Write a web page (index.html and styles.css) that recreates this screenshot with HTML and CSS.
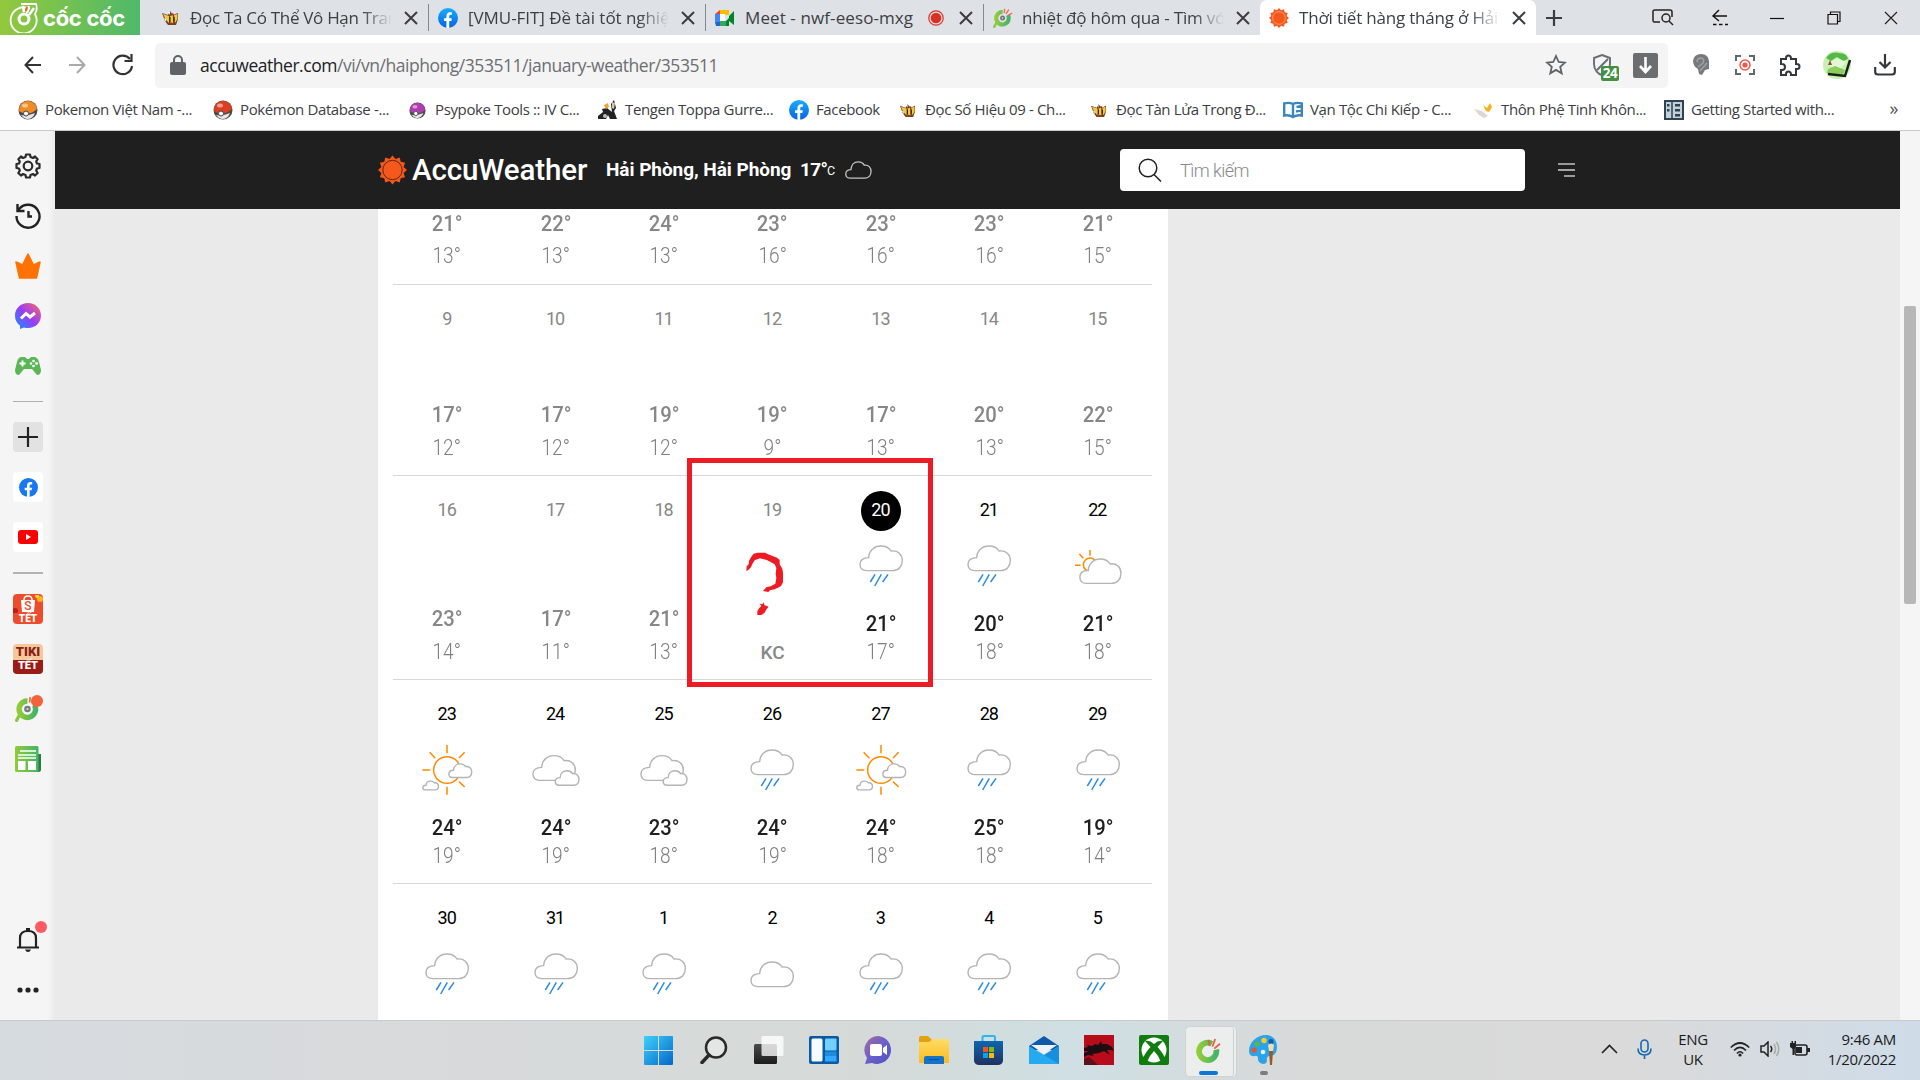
FILE: index.html
```html
<!DOCTYPE html>
<html lang="vi">
<head>
<meta charset="utf-8">
<title>Thời tiết hàng tháng ở Hải Phòng</title>
<link rel="stylesheet" href="styles.css">
</head>
<body>
<svg class="defs" width="0" height="0">
  <defs>
    <linearGradient id="gWin" x1="0" y1="0" x2="1" y2="1"><stop offset="0" stop-color="#3ed0fb"/><stop offset="1" stop-color="#0468c9"/></linearGradient>
    <linearGradient id="gFb" x1="0" y1="0" x2="0" y2="1"><stop offset="0" stop-color="#19aeff"/><stop offset="1" stop-color="#0562e0"/></linearGradient>
    <linearGradient id="gMsg" x1="0" y1="1" x2="1" y2="0"><stop offset="0" stop-color="#0695ff"/><stop offset=".5" stop-color="#9a3cf8"/><stop offset="1" stop-color="#ff6c60"/></linearGradient>
    <linearGradient id="gChat" x1="0" y1="0" x2="1" y2="1"><stop offset="0" stop-color="#a86a9c"/><stop offset=".5" stop-color="#6a60cc"/><stop offset="1" stop-color="#4b53bc"/></linearGradient>
    <linearGradient id="gGreen" x1="0" y1="0" x2="1" y2="0"><stop offset="0" stop-color="#92cb3b"/><stop offset="1" stop-color="#43b565"/></linearGradient>
    <linearGradient id="gYel" x1="0" y1="0" x2="0" y2="1"><stop offset="0" stop-color="#ffdb66"/><stop offset="1" stop-color="#fcbc1c"/></linearGradient>
    <linearGradient id="gStore" x1="0" y1="0" x2="0" y2="1"><stop offset="0" stop-color="#0d67b0"/><stop offset="1" stop-color="#21315f"/></linearGradient>
    <linearGradient id="gDark" x1="0" y1="0" x2="0" y2="1"><stop offset="0" stop-color="#4a4a4a"/><stop offset="1" stop-color="#1c1c1c"/></linearGradient>
    <path id="cloud" d="M32 86C18 86 12 78 12 67C12 54 22 47 38 47C39 26 54 12 75 12C90 12 99 17 105 27C126 24 139 38 139 55C139 73 128 86 110 86Z" vector-effect="non-scaling-stroke"/>
    <symbol id="rain" viewBox="0 0 150 150"><use href="#cloud" class="cl"/><path class="drop" d="M57 97L43 120M76 97L56 132M96 97L80 120"/></symbol>
    <symbol id="cloudy" viewBox="0 0 150 150"><use href="#cloud" class="cl" y="24"/></symbol>
    <symbol id="clouds" viewBox="0 0 150 150"><use href="#cloud" class="cl" transform="translate(-6 17)"/><use href="#cloud" class="cl" transform="translate(66 67) scale(.56 .59)"/></symbol>
    <symbol id="sunny" viewBox="0 0 150 150" overflow="visible"><circle class="sun" cx="75" cy="72" r="40"/><path class="sun" d="M75-3V22M75 122V146M1 72H25M23 19L40 37M128 19L111 36M128 123L111 107"/><use href="#cloud" class="cl" transform="translate(74 47) scale(.54 .55)"/><use href="#cloud" class="cl" transform="translate(-2 101) scale(.37 .355)"/></symbol>
    <symbol id="part" viewBox="0 0 150 150"><circle class="sun" cx="51" cy="68" r="20"/><path class="sun" d="M51 24V41M19 36L31 49M6 70H23"/><use href="#cloud" class="cl" transform="translate(9 39) scale(.97 .99)"/></symbol>
    <symbol id="fb" viewBox="0 0 20 20"><circle cx="10" cy="10" r="10"/><path fill="#fff" d="M8.4 20V13H6V10.200H8.400V8.100C8.400 5.600 9.800 4.300 12 4.300C13 4.300 13.900 4.500 13.900 4.500V6.800H12.700C11.600 6.800 11.200 7.500 11.200 8.300V10.200H13.800L13.400 13H11.200V20Z"/></symbol>
    <symbol id="coc" viewBox="0 0 24 24"><path d="M5 16L1.500 22.500" stroke="#8cc83c" stroke-width="3" stroke-linecap="round"/><path d="M18 8.500A7.600 7.600 0 1 1 11.500 4.600" fill="none" stroke="url(#gGreen)" stroke-width="5"/><circle cx="11.500" cy="12" r="3" fill="#77797c"/><circle cx="11.500" cy="12" r="1" fill="#ddd"/><path d="M13.500 6L14 1M15.500 7L19 2M17.500 9.500L23 6" stroke="#f2694b" stroke-width="1.600"/></symbol>
    <symbol id="sunlogo" viewBox="-15 -15 30 30"><path fill="#f4581b" d="M0-15L3-11.500L7.500-13L8.500-8.500L13-7.500L11.500-3L15 0L11.500 3L13 7.500L8.500 8.500L7.500 13L3 11.500L0 15L-3 11.500L-7.500 13L-8.500 8.500L-13 7.500L-11.500 3L-15 0L-11.500-3L-13-7.500L-8.500-8.500L-7.500-13L-3-11.500Z"/><circle r="10" fill="#f4581b" stroke="#5a2410"/></symbol>
    <symbol id="sunfav" viewBox="-15 -15 30 30"><path fill="#f4581b" d="M0-15L3-11.500L7.500-13L8.500-8.500L13-7.500L11.500-3L15 0L11.500 3L13 7.500L8.500 8.500L7.500 13L3 11.500L0 15L-3 11.500L-7.500 13L-8.500 8.500L-13 7.500L-11.500 3L-15 0L-11.500-3L-13-7.500L-8.500-8.500L-7.500-13L-3-11.500Z"/><circle r="9.500" fill="#f4581b" stroke="#fbb899"/></symbol>
    <symbol id="bee" viewBox="0 0 18 18"><path fill="#6b4420" d="M1 4L7 6L9 2L12 6L17 4V10L15 16H7L4 12Z"/><path fill="#f3c744" d="M2 5L8 7V14L5 11ZM9 7L12 6V14L9 15ZM13 6L16.500 5V10L14 14Z"/><path fill="#fff" d="M7 3L9 2.500V6ZM3 9L5 10V13Z"/><path fill="#b5291d" d="M11 4L13 5L12 8ZM8 13L12 14L10 16Z"/><path d="M9 8V13M13 8V12" stroke="#2c1a10"/></symbol>
    <symbol id="x" viewBox="0 0 14 14"><path d="M1 1L13 13M13 1L1 13" fill="none" stroke="#3a3d41" stroke-width="2"/></symbol>
    <symbol id="ball" viewBox="0 0 20 20"><circle cx="10" cy="10" r="9.500" fill="#4c4846"/><path d="M1 11A9 9 0 0 1 19 9Q14 14 10 13Q5 14 1 11Z"/><ellipse cx="7" cy="5.500" rx="3" ry="2" fill="#fff" opacity=".5"/><path fill="#e6e6ea" d="M3 15Q10 16 17 13Q15 19 9 19Q5 18 3 15Z"/><circle cx="8" cy="13.500" r="2.500" fill="#fff" stroke="#444"/></symbol>
  </defs>
</svg>

<header class="tabs">
  <div class="brand">
    <svg width="30" height="30" viewBox="0 0 30 30" fill="none" stroke="#fff"><path d="M21 6A13 13 0 1 0 26 11C28 8 28 4 27 1H12" stroke-width="1.800"/><circle cx="15" cy="16" r="5" stroke-width="3"/><path d="M15 9L14 3M18 10L20 3M20 12L25 5" stroke-width="2.500"/><path d="M17 8L18 4" stroke="#f05b3a" stroke-width="2"/></svg>
    <span class="wordmark">cốc cốc</span>
  </div>
  <div class="tab t1"><svg width="18" height="18"><use href="#bee"/></svg><span class="title">Đọc Ta Có Thể Vô Hạn Tran</span><svg class="x"><use href="#x"/></svg></div>
  <div class="tab t2"><svg width="20" height="20" fill="url(#gFb)"><use href="#fb"/></svg><span class="title">[VMU-FIT] Đề tài tốt nghiệ</span><svg class="x"><use href="#x"/></svg></div>
  <div class="tab t3"><svg width="20" height="16" viewBox="0 0 20 16"><path fill="#ea4335" d="M0 4L5 0V4Z"/><path fill="#fbbc04" d="M5 0H14V5H5Z"/><path fill="#4285f4" d="M0 4H5V12H0Z"/><path fill="#34a853" d="M5 11H14V16H5Z"/><path fill="#1967d2" d="M0 12H5V16H1Z"/><path fill="#00832d" d="M14 6L19 1V15L14 11V16H11V11L14 8Z"/><path fill="#fff" d="M5 4H10V11H5Z"/></svg><span class="title">Meet - nwf-eeso-mxg</span><svg class="rec" width="16" height="16" viewBox="0 0 16 16"><circle cx="8" cy="8" r="7.200" fill="none" stroke="#d93025" stroke-width="1.200"/><circle cx="8" cy="8" r="5.300" fill="#d93025"/></svg><svg class="x"><use href="#x"/></svg></div>
  <div class="tab t4"><svg width="20" height="20"><use href="#coc"/></svg><span class="title">nhiệt độ hôm qua - Tìm vớ</span><svg class="x"><use href="#x"/></svg></div>
  <div class="tab t5"><svg width="20" height="20"><use href="#sunfav"/></svg><span class="title">Thời tiết hàng tháng ở Hải</span><svg class="x"><use href="#x"/></svg></div>
  <svg class="newtab" width="16" height="16" viewBox="0 0 16 16"><path d="M8 0V16M0 8H16" stroke="#3a3d41" stroke-width="2.200"/></svg>
  <div class="wincontrols">
    <svg width="22" height="18" viewBox="0 0 22 18" fill="none" stroke="#222" stroke-width="1.500"><path d="M8 13H2Q1 13 1 11V2Q1 1 3 1H18Q20 1 20 3V8"/><circle cx="14" cy="9" r="4"/><path d="M17 12L21 16"/></svg>
    <svg width="18" height="18" viewBox="0 0 18 18" fill="none" stroke="#111" stroke-width="1.400"><path d="M16 7H2M8 1L2 7L8 12"/><path d="M2 15.500H17" stroke-dasharray="3.500 2.500"/></svg>
    <svg width="14" height="18" viewBox="0 0 14 18"><path d="M0 9.500H14" stroke="#111" stroke-width="1.200"/></svg>
    <svg width="14" height="14" viewBox="0 0 14 14" fill="none" stroke="#111" stroke-width="1.200"><path d="M1 3.500H10.500V13H1ZM3.500 3V1H13V10.500H11"/></svg>
    <svg width="14" height="14" viewBox="0 0 14 14"><path d="M1 1L13 13M13 1L1 13" stroke="#222" stroke-width="1.200"/></svg>
  </div>
</header>

<nav class="toolbar">
  <div class="navbtns">
    <svg width="18" height="18" viewBox="0 0 18 18" fill="none" stroke="#333" stroke-width="2"><path d="M17 9H2M9 1L1.500 9L9 17"/></svg>
    <svg width="18" height="18" viewBox="0 0 18 18" fill="none" stroke="#aaa" stroke-width="2"><path d="M1 9H16M9 1L16.500 9L9 17"/></svg>
    <svg width="22" height="22" viewBox="0 0 22 22" fill="none" stroke="#333" stroke-width="2.200"><path d="M20 12A9.300 9.300 0 1 1 18 5"/><path d="M19.500 0V7H12.500"/></svg>
  </div>
  <div class="omnibox">
    <svg width="16" height="20" viewBox="0 0 16 20"><rect y="7" width="16" height="13" rx="2" fill="#5f6368"/><path d="M4 8V5A4 4 0 0 1 12 5V8" fill="none" stroke="#5f6368" stroke-width="2"/></svg>
    <span class="url"><b>accuweather.com</b>/vi/vn/haiphong/353511/january-weather/353511</span>
    <svg class="star" width="22" height="22" viewBox="0 0 22 22"><path d="M11 2L13.700 8L20 8.600L15.200 12.800L16.700 19.300L11 15.900L5.300 19.300L6.800 12.800L2 8.600L8.300 8Z" fill="none" stroke="#5f6368" stroke-width="1.800"/></svg>
    <span class="shield"><svg width="18" height="22" viewBox="0 0 18 22"><path d="M9 1L17 4V10C17 16 13 20 9 21C5 20 1 16 1 10V4ZM15 5L4 16" fill="none" stroke="#6a6d70" stroke-width="1.900"/></svg><i>24</i></span>
    <svg class="dl" width="25" height="25" viewBox="0 0 25 25"><rect width="25" height="25" rx="2" fill="#6a6e70"/><path d="M12.500 4V19M7 13L12.500 19L18 13" fill="none" stroke="#fff" stroke-width="2.600"/></svg>
  </div>
  <div class="exts">
    <svg width="16" height="22" viewBox="0 0 16 22"><path d="M8 0C13 0 16 3 16 8V15L12 16L9 21L6 20L5 15Q0 12 0 7Q1 0 8 0Z" fill="#77797b"/><path d="M4 8Q4 4 8 4Q12 5 10 9L5 13M7 17L14 9" fill="none" stroke="#a0a0a0" stroke-width="1.500"/></svg>
    <svg width="20" height="20" viewBox="0 0 20 20"><path d="M1 6V1H6M14 1H19V6M19 14V19H14M6 19H1V14" fill="none" stroke="#63666a" stroke-width="2"/><circle cx="10" cy="10" r="5" fill="none" stroke="#f15a4a" stroke-width="1.500"/><circle cx="10" cy="10" r="2.600" fill="#f15a4a"/></svg>
    <svg width="23" height="23" viewBox="0 0 23 23"><path d="M3 5H8V4A2.500 2.500 0 0 1 13 4V5H18V10H19A2.500 2.500 0 0 1 19 15H18V21H13V20A2.500 2.500 0 0 0 8 20V21H3V16H4A2.700 2.700 0 0 0 4 10H3Z" fill="none" stroke="#35383b" stroke-width="2"/></svg>
    <svg width="28" height="28" viewBox="0 0 28 28"><circle cx="14" cy="14" r="14" fill="#c9efb2"/><path fill="#54b947" d="M3 7Q8 0 16 2Q24 2 25 8L20 10L14 6L8 10Z"/><path fill="#e2f7d2" d="M5 12L14 7L23 11L18 17L8 16Z"/><path fill="#8bcc5c" d="M5 18L12 15L22 19L20 24L4 22Z"/><path d="M27 9L22 25L5 23" fill="none" stroke="#17201a" stroke-width="2.500"/><path fill="#8b4e35" d="M5 14L7 9L9 14Z"/></svg>
    <svg width="22" height="22" viewBox="0 0 22 22" fill="none" stroke="#35383b" stroke-width="2.200"><path d="M11 0V13M5.500 8L11 13.500L16.500 8M1.200 13V18Q1.200 20.500 4 20.500H18Q20.800 20.500 20.800 18V13"/></svg>
  </div>
</nav>

<div class="bookmarks">
  <div class="bm" style="width:195px"><svg width="20" height="20" fill="#f08c28"><use href="#ball"/></svg><span>Pokemon Việt Nam -...</span></div>
  <div class="bm" style="width:195px"><svg width="20" height="20" fill="#dc3e22"><use href="#ball"/></svg><span>Pokémon Database -...</span></div>
  <div class="bm" style="width:190px"><svg class="sm" width="17" height="17" fill="#b03db0"><use href="#ball"/></svg><span>Psypoke Tools :: IV C...</span></div>
  <div class="bm" style="width:191px"><svg width="20" height="20" viewBox="0 0 20 20"><path fill="#222" d="M0 16L5 12L4 9L9 8L14 12L13 4L16 0L18 8L16 11L19 19H12L10 15L8 19H0Z"/><path fill="#efa42c" d="M6 5L10 3L11 7L8 9Z"/><path fill="#d8c4b4" d="M14 2L17 3L16 9L14 8Z"/><circle cx="7" cy="16" r="2" fill="#bbb"/></svg><span>Tengen Toppa Gurre...</span></div>
  <div class="bm" style="width:109px"><svg width="20" height="20" fill="url(#gFb)"><use href="#fb"/></svg><span>Facebook</span></div>
  <div class="bm" style="width:191px"><svg class="sm" width="17" height="17"><use href="#bee"/></svg><span>Đọc Số Hiệu 09 - Ch...</span></div>
  <div class="bm" style="width:194px"><svg class="sm" width="17" height="17"><use href="#bee"/></svg><span>Đọc Tàn Lửa Trong Đ...</span></div>
  <div class="bm" style="width:191px"><svg width="20" height="18" viewBox="0 0 20 18" fill="none" stroke="#3b87bd" stroke-width="2.400"><path d="M1.200 2.500Q6 1 10 3Q14 1 18.800 2.500V14.500Q14 13.500 10 16Q6 13.500 1.200 14.500ZM10 3V16M13.500 6L19 5M13 10.500L19 9"/></svg><span>Vạn Tộc Chi Kiếp - C...</span></div>
  <div class="bm" style="width:190px"><svg width="20" height="18" viewBox="0 0 20 18"><path fill="#dcd9d3" d="M0 8L8 10L14 15L10 17L5 14Z"/><path fill="#f8b31c" d="M9 4L13 7L16 2L18 6L15 11L12 10Z"/></svg><span>Thôn Phệ Tinh Khôn...</span></div>
  <div class="bm last"><svg width="20" height="20" viewBox="0 0 20 20"><rect x="1" y="1" width="18" height="18" fill="#bfd2dd" stroke="#33424c" stroke-width="2"/><path d="M8 1V19" stroke="#33424c" stroke-width="1.500"/><path fill="#33424c" d="M3 4H5.500V6.500H3ZM3 9H5.500V11.500H3ZM11 4H16V6.500H11ZM11 9H16V11.500H11ZM11 14H16V16.500H11Z"/></svg><span>Getting Started with...</span></div>
  <span class="more">»</span>
</div>

<main class="main">
  <aside class="side">
    <div class="si"><svg width="26" height="26" viewBox="0 0 26 26" fill="none" stroke="#2b2b2b" stroke-width="2.200"><path stroke-linejoin="round" d="M10.500 4L11 1.500H15L15.500 4L18 5L20 3.500L22.700 6.200L21.200 8.300L22 10.500L24.500 11V15L22 15.500L21.200 17.700L22.700 20L20 22.500L18 21L15.500 22L15 24.500H11L10.500 22L8 21L6 22.500L3.300 20L4.800 17.700L4 15.500L1.500 15V11L4 10.500L4.800 8.300L3.300 6.200L6 3.500L8 5Z"/><circle cx="13" cy="13" r="4.300"/></svg></div>
    <div class="si"><svg width="26" height="26" viewBox="0 0 26 26" fill="none" stroke="#222" stroke-width="2.400"><path d="M1.500 13A11.500 11.500 0 1 0 4.500 5.500L2.500 8M2.500 1V8H9.500M13.500 8V13.500H17"/></svg></div>
    <div class="si"><svg width="26" height="26" viewBox="0 0 26 26"><path fill="#ff7200" stroke="#ff7200" stroke-width="1.500" stroke-linejoin="round" d="M1 9L7.500 12L13 1L18.500 12L25 9L21.500 25H4.500Z"/></svg></div>
    <div class="si"><svg width="26" height="26" viewBox="0 0 26 26"><path fill="url(#gMsg)" d="M13 0C20.500 0 26 5.500 26 12.500S20.500 25 13 25Q11 25 9 24.500L5 26V22.500Q0 19 0 12.500C0 5.500 5.500 0 13 0Z"/><path d="M6 15.500L11 10.500L15 14L20 10" fill="none" stroke="#fff" stroke-width="3"/></svg></div>
    <div class="si"><svg width="26" height="18" viewBox="0 0 26 18"><path fill="#5bb658" d="M7 0H10L12 2H14L16 0H20Q23 1 24 5L26 13Q26 18 22 18L17 12H9L4 18Q0 18 0 13L2 5Q3 0 7 0Z"/><path d="M7.500 3.500V9.500M4.500 6.500H10.500" stroke="#fff" stroke-width="2"/><g fill="#fff"><circle cx="18.500" cy="4" r="1.300"/><circle cx="18.500" cy="9" r="1.300"/><circle cx="16" cy="6.500" r="1.200"/><circle cx="21.500" cy="6.500" r="1.400"/></g></svg></div>
    <hr>
    <div class="si"><span class="box grey"><svg width="20" height="20" viewBox="0 0 20 20"><path d="M10 0V20M0 10H20" stroke="#222" stroke-width="2.200"/></svg></span></div>
    <div class="si"><span class="box"><svg width="19" height="19" fill="#1877f2"><use href="#fb"/></svg></span></div>
    <div class="si"><span class="box"><svg width="20" height="14" viewBox="0 0 20 14"><rect width="20" height="14" rx="3" fill="#f00"/><path d="M8 4L13 7L8 10Z" fill="#fff"/></svg></span></div>
    <hr class="thick">
    <div class="si"><span class="box shopee"><svg width="30" height="18" viewBox="0 0 30 18"><path d="M11 5Q11 1 15 1Q19 1 19 5" fill="none" stroke="#fff" stroke-width="1.500"/><path fill="#fff" d="M8 5H22L21 17H9Z"/><circle cx="27" cy="4" r="3" fill="#fbb617"/><circle cx="24" cy="1" r="2" fill="#fbd23a"/><circle cx="2" cy="16" r="3" fill="#c31a1a"/></svg><i class="s">S</i><i>TẾT</i></span></div>
    <div class="si"><span class="box tiki"><i class="dk">TIKI</i><i>TẾT</i></span></div>
    <div class="si rel"><svg width="26" height="28" viewBox="0 0 24 24"><use href="#coc"/></svg><b class="dot orange"></b></div>
    <div class="si"><svg width="26" height="26" viewBox="0 0 26 26"><path fill="#2b7b43" d="M22 8H26V24Q26 26 22 26Z"/><rect width="23.500" height="26" rx="1.500" fill="url(#gGreen)"/><path d="M5 5H21M3 9H21M3 12H21" stroke="#fff" stroke-width="1.600"/><path d="M3 15H10.500V24H3ZM13 15H21V24H13Z" fill="#fff"/></svg></div>
    <div class="grow"></div>
    <div class="si rel bell"><svg width="24" height="25" viewBox="0 0 24 25"><path d="M1 20.500H23M4 20V11Q4 4 12 4Q20 4 20 11V20" fill="none" stroke="#222" stroke-width="2.200"/><path fill="#222" d="M10 1H14V4H10ZM9 22.500H15Q14 25 12 25T9 22.500Z"/></svg><b class="dot red"></b></div>
    <div class="si"><svg width="22" height="6" viewBox="0 0 22 6" fill="#222"><circle cx="3" cy="3" r="2.600"/><circle cx="11" cy="3" r="2.600"/><circle cx="19" cy="3" r="2.600"/></svg></div>
  </aside>

  <section class="page">
    <div class="aw">
      <svg width="29" height="30"><use href="#sunlogo"/></svg>
      <span class="logo">AccuWeather</span>
      <span class="loc">Hải Phòng, Hải Phòng</span><span class="cur">17°</span><span class="unit">C</span>
      <svg class="mini" width="27" height="18" viewBox="8 8 136 82" preserveAspectRatio="none" fill="none" stroke="#c4c4c4" stroke-width="1.300"><use href="#cloud"/></svg>
      <div class="search"><svg width="24" height="24" viewBox="0 0 24 24" fill="none" stroke="#1f1f1f" stroke-width="1.500"><circle cx="10" cy="10" r="8.800"/><path d="M16 16.500L23 23.500"/></svg><span>Tìm kiếm</span></div>
      <svg class="menu" width="17" height="14" viewBox="0 0 17 14"><path d="M0 1H17M6 13H17" stroke="#999" stroke-width="1.800"/><path d="M0 7H17" stroke="#fff" stroke-width="1.200"/></svg>
    </div>
    <div class="card">
      <div class="week first">
        <div class="day past"><b>21°</b><em>13°</em></div><div class="day past"><b>22°</b><em>13°</em></div><div class="day past"><b>24°</b><em>13°</em></div><div class="day past"><b>23°</b><em>16°</em></div><div class="day past"><b>23°</b><em>16°</em></div><div class="day past"><b>23°</b><em>16°</em></div><div class="day past"><b>21°</b><em>15°</em></div>
      </div>
      <div class="week short">
        <div class="day past"><span>9</span><div class="ic"></div><b>17°</b><em>12°</em></div><div class="day past"><span>10</span><div class="ic"></div><b>17°</b><em>12°</em></div><div class="day past"><span>11</span><div class="ic"></div><b>19°</b><em>12°</em></div><div class="day past"><span>12</span><div class="ic"></div><b>19°</b><em>9°</em></div><div class="day past"><span>13</span><div class="ic"></div><b>17°</b><em>13°</em></div><div class="day past"><span>14</span><div class="ic"></div><b>20°</b><em>13°</em></div><div class="day past"><span>15</span><div class="ic"></div><b>22°</b><em>15°</em></div>
      </div>
      <div class="week">
        <div class="day past"><span>16</span><div class="ic"></div><b>23°</b><em>14°</em></div><div class="day past"><span>17</span><div class="ic"></div><b>17°</b><em>11°</em></div><div class="day past"><span>18</span><div class="ic"></div><b>21°</b><em>13°</em></div><div class="day past"><span>19</span><div class="ic"></div><b></b><em class="kc">KC</em></div>
        <div class="day today"><span>20</span><svg class="ic"><use href="#rain"/></svg><b>21°</b><em>17°</em></div><div class="day"><span>21</span><svg class="ic"><use href="#rain"/></svg><b>20°</b><em>18°</em></div><div class="day"><span>22</span><svg class="ic"><use href="#part"/></svg><b>21°</b><em>18°</em></div>
      </div>
      <div class="week">
        <div class="day"><span>23</span><svg class="ic"><use href="#sunny"/></svg><b>24°</b><em>19°</em></div><div class="day"><span>24</span><svg class="ic"><use href="#clouds"/></svg><b>24°</b><em>19°</em></div><div class="day"><span>25</span><svg class="ic"><use href="#clouds"/></svg><b>23°</b><em>18°</em></div><div class="day"><span>26</span><svg class="ic"><use href="#rain"/></svg><b>24°</b><em>19°</em></div><div class="day"><span>27</span><svg class="ic"><use href="#sunny"/></svg><b>24°</b><em>18°</em></div><div class="day"><span>28</span><svg class="ic"><use href="#rain"/></svg><b>25°</b><em>18°</em></div><div class="day"><span>29</span><svg class="ic"><use href="#rain"/></svg><b>19°</b><em>14°</em></div>
      </div>
      <div class="week final">
        <div class="day"><span>30</span><svg class="ic"><use href="#rain"/></svg></div><div class="day"><span>31</span><svg class="ic"><use href="#rain"/></svg></div><div class="day"><span>1</span><svg class="ic"><use href="#rain"/></svg></div><div class="day"><span>2</span><svg class="ic"><use href="#cloudy"/></svg></div><div class="day"><span>3</span><svg class="ic"><use href="#rain"/></svg></div><div class="day"><span>4</span><svg class="ic"><use href="#rain"/></svg></div><div class="day"><span>5</span><svg class="ic"><use href="#rain"/></svg></div>
      </div>
    </div>
  </section>
  <div class="scroll"><div class="thumb"></div></div>
  <div class="marker"><svg width="236" height="219" viewBox="36 39 708 657"><path fill="#ed1c24" d="M199 363L200 349L206 343L207 332L213 322L221 311L233 308H256L262 312L276 317L291 323L299 330V343L307 356L309 368V397L303 408L294 413L284 418L270 421L265 426L249 423L259 412L272 409L286 401L289 384L287 371L289 354L284 343L272 336L260 330L240 325L224 331L217 342L213 352L204 361ZM232 483L238 474L244 468L239 461L247 463L250 457L254 466L266 470L258 480L254 488L244 495H232Z"/></svg></div>
</main>

<footer class="taskbar">
  <div class="apps">
    <div class="app"><svg width="29" height="29" viewBox="0 0 29 29"><path fill="url(#gWin)" d="M0 1Q0 0 1 0H14V14H0ZM15 0H28Q29 0 29 1V14H15ZM0 15H14V29H1Q0 29 0 28ZM15 15H29V28Q29 29 28 29H15Z"/></svg></div>
    <div class="app"><svg width="28" height="28" viewBox="0 0 28 28" fill="none" stroke="#2a2a2a"><circle cx="16" cy="11.500" r="10" stroke-width="2.500" fill="#e2e6e4"/><path d="M9 19L2 26.500" stroke-width="3.500" stroke-linecap="round"/></svg></div>
    <div class="app"><svg width="30" height="28" viewBox="0 0 30 28"><rect y="8" width="23" height="20" rx="1.500" fill="url(#gDark)"/><rect x="7.500" width="22" height="20" rx="1.500" fill="#fff" opacity=".78"/></svg></div>
    <div class="app"><svg width="30" height="28" viewBox="0 0 30 28"><rect width="30" height="28" rx="2" fill="#0b59a5"/><rect x="2.500" y="2.500" width="11" height="23" rx="1.500" fill="#f8fbfe"/><rect x="16" y="2.500" width="11.500" height="12" rx="1" fill="#72d0fb"/><rect x="16" y="15.500" width="11.500" height="4.500" fill="#1d8de2"/><rect x="16" y="20" width="11.500" height="5.500" fill="#30a8fb"/></svg></div>
    <div class="app"><svg width="29" height="29" viewBox="0 0 29 29"><path fill="url(#gChat)" d="M14.500 0A14 14 0 1 1 8 27L1 28L3 22A14 14 0 0 1 14.500 0Z"/><rect x="6" y="8" width="12" height="12" rx="2" fill="#fff"/><path fill="#fff" d="M19 12L23 9V19L19 16Z"/></svg></div>
    <div class="app"><svg width="30" height="28" viewBox="0 0 30 28"><path fill="#e2a10d" d="M0 2Q0 0 2 0H9L13 4H20V10H0Z"/><path fill="url(#gYel)" d="M0 6H10L14 3H28Q30 3 30 5V27H0Z"/><path fill="#1572c7" d="M5 28V22Q5 20 7 20H23Q25 20 25 22V28Z"/><path d="M10 23.500H20" stroke="#0b4f95"/></svg></div>
    <div class="app"><svg width="29" height="30" viewBox="0 0 29 30"><path d="M8.500 6V2Q8.500 1 10 1H19.500Q21 1 21 2V6" fill="none" stroke="#28b8ee" stroke-width="2"/><path fill="url(#gStore)" d="M0 6H29V26Q28 30 24 30H5Q1 30 0 26Z"/><path fill="#f35325" d="M9 12H14V17H9Z"/><path fill="#81bc06" d="M15 12H20V17H15Z"/><path fill="#05a6f0" d="M9 18H14V23H9Z"/><path fill="#ffba08" d="M15 18H20V23H15Z"/></svg></div>
    <div class="app"><svg width="30" height="28" viewBox="0 0 30 28"><path fill="#0c5bab" d="M0 10L15 0L30 10V14H0Z"/><path fill="#25aaf0" d="M0 10L15 19L30 10V28H0Z"/><path fill="#1385d5" d="M15 19L30 10V28Z" opacity=".75"/><path fill="#f0f3f6" d="M2 9H28L15 18Z"/></svg></div>
    <div class="app"><svg width="30" height="30" viewBox="0 0 30 30"><rect width="30" height="30" fill="#b80c1a"/><path fill="#1b0d12" d="M0 13L4 12L3 10L8 11L11 9L14 10L17 6L18 9L23 9L28 12L30 16L27 15L23 15L26 20L20 16L15 18L8 19L10 21L4 20L0 22V18L5 16L0 16Z"/><path fill="#5e0f18" d="M0 24L5 22L10 26L14 30H0Z"/></svg></div>
    <div class="app"><svg width="30" height="30" viewBox="0 0 30 30"><rect width="30" height="30" rx="2" fill="#107c10"/><circle cx="15" cy="15" r="12.500" fill="#fff"/><path fill="#107c10" d="M6 6Q11 5 15 9Q19 5 24 6L18.500 12Q25 19 26.500 25L22 27Q20 21 15 16Q10 21 8 27L3.500 25Q5 19 11.500 12Z"/></svg></div>
    <div class="app active"><svg width="25" height="25" viewBox="0 0 26 26"><path d="M16.500 6A9 9 0 1 0 21 12" fill="none" stroke="url(#gGreen)" stroke-width="6"/><path d="M14 8L13 2M17 9L20 1M19 11L25 6" stroke="#f05b3a" stroke-width="1.800"/></svg></div>
    <div class="app paint"><svg width="29" height="30" viewBox="0 0 29 30"><path fill="#2ba3e8" d="M17 0C24 0 28 5 28 12C28 18 25 21 20 21Q17 22 18 25Q18 29 14 29Q9 28 9 24Q9 20 6 21Q0 22 0 16C0 7 8 0 17 0Z"/><circle cx="15" cy="5.500" r="2.700" fill="#ffc928"/><circle cx="8" cy="9" r="2.600" fill="#64b53c"/><circle cx="5" cy="15" r="2.600" fill="#e9532d"/><circle cx="22" cy="6.500" r="2.500" fill="#165ca8"/><circle cx="14" cy="17" r="2.300" fill="#dff1fb"/><path fill="#f0ddb5" d="M19 10Q22 7 25 10L24 16H20Z"/><path fill="#9c5a20" d="M20 16H24L23 30H21Z"/></svg></div>
  </div>
  <div class="tray">
    <svg width="17" height="10" viewBox="0 0 17 10"><path d="M1 9L8.500 1.500L16 9" fill="none" stroke="#222" stroke-width="1.600"/></svg>
    <svg class="mic" width="15" height="20" viewBox="0 0 15 20" fill="none" stroke="#1668b3" stroke-width="1.600"><rect x="4" y="1" width="7" height="12" rx="3.500"/><path d="M1 9.500Q1 16 7.500 16T14 9.500M7.500 16V20"/></svg>
    <div class="lang">ENG<br>UK</div>
    <svg class="net" width="20" height="15" viewBox="0 0 20 15" fill="none" stroke="#222" stroke-width="1.700"><path d="M.8 5.500Q10-3.500 19.200 5.500M4 8.500Q10 2.500 16 8.500M7 11.500Q10 8 13 11.500"/><circle cx="10" cy="13" r="1.600" fill="#222" stroke="none"/></svg>
    <svg class="net" width="20" height="16" viewBox="0 0 20 16" fill="none" stroke="#222" stroke-width="1.500"><path d="M1 5H4L8 1V15L4 11H1Z"/><path d="M10.500 5Q13 8 10.500 11"/><path d="M14 3Q17 8 14 13M16.500 1Q21 8 16.500 15" stroke="#aaa"/></svg>
    <svg width="20" height="16" viewBox="0 0 20 16"><rect x="5" y="4" width="12" height="10" rx="2" fill="none" stroke="#222" stroke-width="1.600"/><path fill="#222" d="M6 6H12V12H6ZM17 7H20V11H17ZM0 2H1.500V0H3V2H4.500V0H6V6L4 8V14H2.500V8L0 6Z"/></svg>
    <div class="clock">9:46 AM<br>1/20/2022</div>
  </div>
</footer>
</body>
</html>
```
FILE: styles.css
```css
* { box-sizing: border-box; }
html, body { margin: 0; height: 1080px; overflow: hidden; }
body { display: flex; flex-direction: column; font-family: "Open Sans", "Noto Sans", sans-serif; color: #3c4043; background: #fff; }
svg { flex: none; display: block; }
.defs { position: absolute; }
i { font-style: normal; }

.tabs { height: 35px; background: #dee1e6; display: flex; align-items: center; }
.brand { width: 140px; height: 35px; background: linear-gradient(90deg, #93c83d, #4fb96a); display: flex; align-items: center; padding-left: 9px; gap: 4px; }
.wordmark { font: 700 22px/30px "Inter", "Open Sans", sans-serif; color: #fff; letter-spacing: -.3px; white-space: nowrap; }
.tab { height: 35px; display: flex; align-items: center; font-size: 17px; letter-spacing: -.05px; padding-right: 10px; border-right: 1px solid #85888d; border-image: linear-gradient(transparent 5px, #85888d 5px, #85888d 30px, transparent 30px) 1; }
.title { flex: 1; overflow: hidden; white-space: nowrap; margin-left: 12px; margin-right: 12px; -webkit-mask: linear-gradient(90deg, #000 calc(100% - 30px), transparent); }
.x { width: 14px; height: 14px; }
.t1 { width: 289px; padding-left: 21px; }
.t1 .title { margin-left: 11px; letter-spacing: -.3px; }
.t2 { width: 277px; padding-left: 9px; }
.t2 .title { margin-left: 10px; }
.t3 { width: 278px; padding-left: 9px; }
.t3 .title { -webkit-mask: none; margin-left: 10px; letter-spacing: .1px; }
.rec { margin-right: 15px; }
.t4 { width: 276px; padding-left: 9px; border: 0; }
.t4 .title { margin-left: 9px; letter-spacing: -.2px; }
.t5 { width: 276px; padding-left: 9px; border: 0; background: #fff; border-radius: 7px 7px 0 0; }
.t5 .title { margin-left: 10px; letter-spacing: -.2px; }
.newtab { margin-left: 10px; }
.wincontrols { display: grid; grid-template-columns: repeat(5, 57px); align-items: center; justify-items: center; margin-left: auto; margin-right: 1px; height: 33px; }

.toolbar { height: 60px; display: flex; align-items: center; }
.navbtns { width: 155px; padding-left: 24px; display: flex; align-items: center; gap: 26px; }
.omnibox { width: 1513px; height: 45px; background: #f4f4f4; border-radius: 5px; display: flex; align-items: center; padding-left: 15px; }
.url { flex: 1; margin-left: 14px; font-size: 17.500px; letter-spacing: -.47px; color: #6b6e72; }
.url b { font-weight: 400; color: #202124; }
.star { margin-left: -1px; margin-right: 26px; }
.shield { position: relative; width: 25px; margin-right: 15px; }
.shield i { position: absolute; left: 8px; top: 12px; width: 18px; height: 15px; background: #458f43; color: #fff; font: 700 13.500px/15px "Open Sans", sans-serif; border-radius: 2px; text-align: center; letter-spacing: -.5px; }
.dl { margin-right: 10px; }
.exts { flex: 1; display: flex; align-items: center; justify-content: space-between; padding: 0 24px 0 25px; }
.exts svg:nth-child(2), .exts svg:nth-child(3) { margin: 0 -2px 0 2px; }

.bookmarks { height: 36px; border-bottom: 1px solid #c9cbcb; display: flex; align-items: center; padding: 0 18px 7px; font-size: 15px; letter-spacing: -.37px; white-space: nowrap; }
.bm { display: flex; align-items: center; gap: 7px; flex: none; }
.bm svg { position: relative; top: 1px; }
.bm .sm { margin: 0 2px 0 1px; }
.more { margin-left: auto; font-size: 18px; color: #555; margin-right: 4px; padding-bottom: 3px; }

.main { height: 889px; display: flex; position: relative; }
.side { width: 55px; background: linear-gradient(90deg, #f5f5f5 48px, #eaeaea); display: flex; flex-direction: column; padding: 10px 0 5px; }
.si { height: 50px; width: 55px; padding-left: 1px; display: flex; align-items: center; justify-content: center; flex: none; }
.bell { padding-bottom: 2px; }
.side hr { width: 30px; height: 1px; margin: 10px 0 10px 13px; border: 0; background: #b2b2b2; flex: none; }
.side hr.thick { height: 2px; }
.box { width: 30px; height: 30px; background: #fff; border-radius: 4px; display: flex; align-items: center; justify-content: center; }
.box.grey { background: #e2e2e2; }
.shopee, .tiki { flex-direction: column; font: 900 10px/11px "Roboto", sans-serif; color: #fff; }
.shopee { background: #ee4d2d; position: relative; }
.shopee .s { position: absolute; top: 7px; color: #ee4d2d; font-size: 12px; font-weight: 500; }
.tiki { background: linear-gradient(#f4c89b 52%, #9b1c17 52%); font-size: 11px; line-height: 14px; }
.tiki .dk { color: #8c1f16; font-size: 13px; }
.rel { position: relative; }
.dot { position: absolute; width: 12px; height: 12px; border-radius: 50%; }
.orange { background: #f4623a; left: 31px; top: 11px; }
.red { background: #ff5a5f; left: 35px; top: 6px; }
.grow { flex: 1; }

.page { width: 1845px; background: #eaeaea; font-family: "Roboto", sans-serif; }
.aw { height: 78px; background: #1f1f1f; display: flex; align-items: center; padding-left: 323px; color: #fff; white-space: nowrap; }
.logo { width: 195px; padding: 0 0 1px 5px; font-size: 29.500px; font-weight: 500; letter-spacing: -.1px; }
.loc { width: 198px; padding: 0 0 2px 4px; font-size: 19px; font-weight: 700; letter-spacing: -.05px; }
.cur { width: 27px; font-size: 19px; font-weight: 700; letter-spacing: -.7px; padding-bottom: 2px; }
.unit { width: 18px; font-size: 12.500px; }
.search { width: 405px; height: 42px; background: #fff; border-radius: 4px; margin-left: 248px; padding-left: 18px; display: flex; align-items: center; gap: 18px; color: #888; font-size: 18px; font-weight: 300; letter-spacing: -.55px; }
.menu { margin-left: 33px; }

.card { width: 790px; height: 811px; margin-left: 323px; background: #fff; padding: 0 16px 0 15px; overflow: hidden; }
.week { height: 204px; border-bottom: 1px solid #d8d8d8; display: grid; grid-template-columns: repeat(7, 1fr); }
.week.first { height: 76px; }
.week.short { height: 191px; }
.week.final { border: 0; }
.day { display: flex; flex-direction: column; align-items: center; padding-top: 15px; color: #000; }
.first .day { padding: 0; }
.day span { width: 40px; height: 40px; line-height: 37px; border-radius: 50%; font-size: 18px; text-align: center; letter-spacing: -1px; padding-right: 1px; }
.today span { background: #000; color: #fff; }
.ic { width: 50px; height: 50px; margin-top: 11px; flex: none; overflow: visible; }
.short .ic { height: 37px; }
.day b { height: 30px; line-height: 28px; margin-top: 17px; font-size: 22.500px; font-weight: 500; color: #1f1f1f; transform: scaleX(.9); }
.day em { height: 26px; line-height: 24px; font-style: normal; font-size: 22.500px; font-weight: 300; color: #808080; transform: scaleX(.85); }
.past, .day.past b { color: #878787; }
.day.past b { margin: 12px 0 5px; }
.first .day.past b { margin: 0 0 4px; }
.day .kc { font-size: 19px; line-height: 26px; font-weight: 500; color: #878787; transform: none; padding-top: 1px; }
.cl { fill: #fff; stroke: #b4b4b4; stroke-width: 1.400px; }
.drop { stroke: #2b8be0; stroke-width: 4.500; fill: none; }
.sun { stroke: #ff8a00; stroke-width: 4.500; fill: none; }

.scroll { width: 20px; background: #f5f5f5; padding: 175px 4px 0; }
.thumb { width: 12px; height: 298px; border-radius: 2px; background: #b7b7b7; }
.marker { position: absolute; left: 687px; top: 327px; width: 246px; height: 229px; border: 5px solid #ed1c24; }

.taskbar { height: 60px; display: flex; background: linear-gradient(90deg, #d6dbe0 0, #d8dadb 20%, #d5dad8 45%, #cfdfe3 56%, #d8d9d9 68%, #dadada 85%, #cfdce8); border-top: 1px solid #c8cac9; }
.apps { margin-left: 631px; display: flex; align-items: center; }
.app { width: 55px; height: 59px; display: flex; align-items: center; justify-content: center; position: relative; padding-bottom: 1px; }
.app.active::before { content: ""; position: absolute; left: 4px; top: 5px; width: 47px; height: 49px; border-radius: 5px; background: #eceeee; border: 1px solid #d0d2d2; border-right: 4px double #cdd0d0; }
.app.active svg { position: relative; }
.app.active::after, .paint::after { content: ""; position: absolute; bottom: 5px; width: 19px; height: 4px; border-radius: 2px; background: #0a78d4; }
.paint::after { width: 8px; background: #7c7c7c; }
.tray { margin-left: auto; width: 319px; padding-right: 24px; padding-bottom: 3px; display: flex; align-items: center; color: #1c1c1c; font-size: 15px; line-height: 20px; letter-spacing: -.3px; }
.mic { margin-left: 19px; }
.lang { text-align: center; width: 60px; margin: 0 7px 0 11px; }
.net { margin-right: 10px; }
.clock { text-align: right; flex: 1; white-space: nowrap; }
```
